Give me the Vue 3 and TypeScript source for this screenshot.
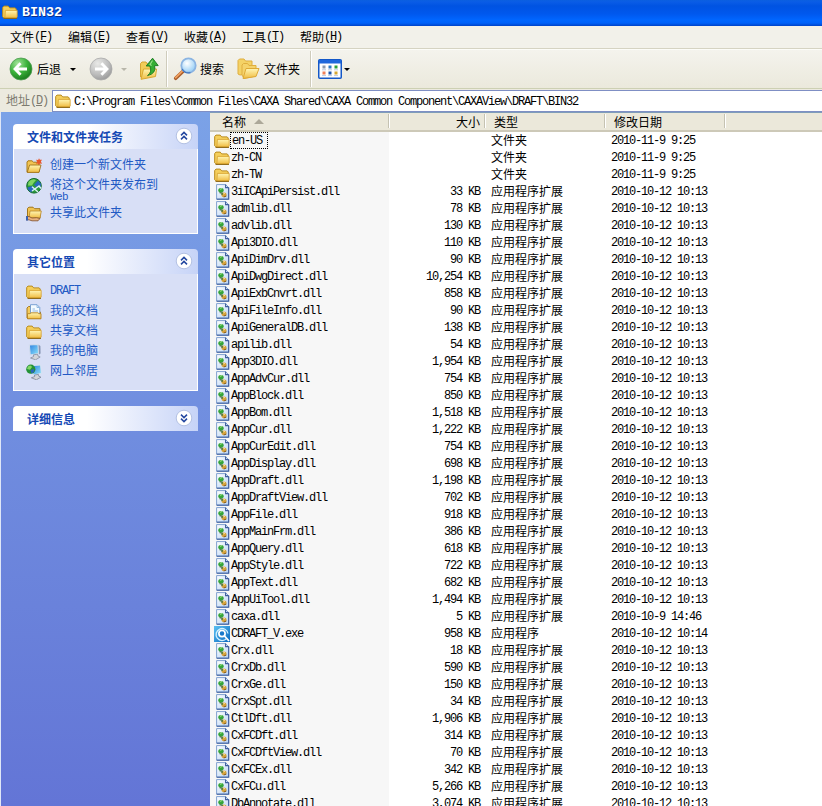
<script setup lang="ts">
interface FileRow { name: string; size: string; kind: string; date: string; icon: string }

const ext = '应用程序扩展'
const stamp = '2010-10-12 10:13'

const folders: FileRow[] = ['en-US', 'zh-CN', 'zh-TW'].map((name) => ({
  name, size: '', kind: '文件夹', date: '2010-11-9 9:25', icon: 'folder',
}))

const entries: [string, string][] = [
  ['3iICApiPersist.dll', '33'], ['admlib.dll', '78'], ['advlib.dll', '130'], ['Api3DIO.dll', '110'],
  ['ApiDimDrv.dll', '90'], ['ApiDwgDirect.dll', '10,254'], ['ApiExbCnvrt.dll', '858'],
  ['ApiFileInfo.dll', '90'], ['ApiGeneralDB.dll', '138'], ['apilib.dll', '54'], ['App3DIO.dll', '1,954'],
  ['AppAdvCur.dll', '754'], ['AppBlock.dll', '850'], ['AppBom.dll', '1,518'], ['AppCur.dll', '1,222'],
  ['AppCurEdit.dll', '754'], ['AppDisplay.dll', '698'], ['AppDraft.dll', '1,198'],
  ['AppDraftView.dll', '702'], ['AppFile.dll', '918'], ['AppMainFrm.dll', '386'], ['AppQuery.dll', '618'],
  ['AppStyle.dll', '722'], ['AppText.dll', '682'], ['AppUiTool.dll', '1,494'], ['caxa.dll', '5'],
  ['CDRAFT_V.exe', '958'], ['Crx.dll', '18'], ['CrxDb.dll', '590'], ['CrxGe.dll', '150'],
  ['CrxSpt.dll', '34'], ['CtlDft.dll', '1,906'], ['CxFCDft.dll', '314'], ['CxFCDftView.dll', '70'],
  ['CxFCEx.dll', '342'], ['CxFCu.dll', '5,266'], ['DbAnnotate.dll', '3,074'],
]

const rows: FileRow[] = folders.concat(entries.map(([name, kb]) => {
  const exe = name.endsWith('.exe')
  return {
    name,
    size: kb + ' KB',
    kind: exe ? '应用程序' : ext,
    date: exe ? '2010-10-12 10:14' : name === 'caxa.dll' ? '2010-10-9 14:46' : stamp,
    icon: exe ? 'exe' : 'dll',
  }
}))

const menus = [
  ['文件', 'F'], ['编辑', 'E'], ['查看', 'V'], ['收藏', 'A'], ['工具', 'T'], ['帮助', 'H'],
]

const places = [
  { icon: 'folder', label: 'DRAFT', latin: true },
  { icon: 'docs', label: '我的文档', latin: false },
  { icon: 'folder', label: '共享文档', latin: false },
  { icon: 'pc', label: '我的电脑', latin: false },
  { icon: 'net', label: '网上邻居', latin: false },
]
</script>

<template>
  <div class="window">
    <svg class="defs" width="0" height="0">
      <defs>
        <linearGradient id="gFold" x1="0" y1="0" x2="0" y2="1"><stop offset="0" stop-color="#fff6b4" /><stop offset="1" stop-color="#f0bc42" /></linearGradient>
        <linearGradient id="gPage" x1="0" y1="0" x2="1" y2="1"><stop offset="0" stop-color="#ffffff" /><stop offset="1" stop-color="#b8d3f4" /></linearGradient>
        <radialGradient id="gGreen" cx=".35" cy=".25" r=".85"><stop offset="0" stop-color="#a4e39a" /><stop offset=".5" stop-color="#3bb33b" /><stop offset="1" stop-color="#147018" /></radialGradient>
        <radialGradient id="gGrey" cx=".35" cy=".25" r=".85"><stop offset="0" stop-color="#e9e9e7" /><stop offset=".6" stop-color="#bcbcbc" /><stop offset="1" stop-color="#929292" /></radialGradient>
        <radialGradient id="gLens" cx=".4" cy=".35" r=".7"><stop offset="0" stop-color="#ffffff" /><stop offset="1" stop-color="#8fcbf5" /></radialGradient>
        <linearGradient id="gScreen" x1="0" y1="0" x2="1" y2="1"><stop offset="0" stop-color="#2b7fe0" /><stop offset="1" stop-color="#8fe6fb" /></linearGradient>
        <linearGradient id="gExe" x1="0" y1="0" x2="1" y2="1"><stop offset="0" stop-color="#5cc1f2" /><stop offset="1" stop-color="#0868c0" /></linearGradient>
      </defs>
      <symbol id="folder" viewBox="0 0 16 16">
        <path d="M.7 12.8V3.4L2 2.1H6.2L7.7 3.9H13.2L14.2 5V13L13.6 13.9H1.8Z" fill="#f5cf5c" stroke="#b88a1c" />
        <path d="M3.4 6.4H15.2V12.9L14.4 13.9H2.8Z" fill="url(#gFold)" stroke="#d5a02c" stroke-width=".8" />
        <path d="M1.6 14.4H15" stroke="#8a6412" />
      </symbol>
      <symbol id="dll" viewBox="0 0 16 16">
        <path d="M2.6 .6H11.6L14.6 3.6V15H2.6Z" fill="url(#gPage)" stroke="#7396cc" stroke-width=".9" />
        <path d="M11.6 .6V3.6H14.6M14.7 3.6V15.3H2.6" fill="none" stroke="#3d5c9c" stroke-width="1.1" />
        <ellipse cx="7" cy="6.2" rx="2.7" ry="2.3" fill="#36a53a" /><path d="M6 5.3L8 4.6" stroke="#a7e290" />
        <ellipse cx="10" cy="10.8" rx="2.6" ry="2.3" fill="#d5a23c" /><path d="M9.3 9.9L11 9.4" stroke="#f4dc8c" />
        <path d="M5.6 8.6L8.2 9.2L8 11" fill="none" stroke="#47713d" stroke-width="1.3" />
        <path d="M9.7 13.1L12.4 12" stroke="#855818" />
      </symbol>
      <symbol id="exe" viewBox="0 0 16 16">
        <rect width="16" height="16" fill="url(#gExe)" />
        <path d="M12.7 12.4A6 6 0 1 1 14 7.5" fill="none" stroke="#d5f2ff" stroke-width="1.3" />
        <circle cx="8" cy="7.6" r="3.1" fill="#1878ca" stroke="#fff" stroke-width="1.7" />
        <path d="M10.5 10L15 15" stroke="#fff" stroke-width="1.8" />
      </symbol>
      <symbol id="newfolder" viewBox="0 0 16 16">
        <path d="M1 14V4L2 2.8H6L7.5 4.2H13V14Z" fill="#f1c453" stroke="#a97a19" />
        <path d="M3.6 7H15L13 14.4H1.2Z" fill="url(#gFold)" stroke="#a0731c" stroke-width=".9" />
        <path d="M13 .2L13.8 1.8L16 1.7L14.9 3.6L16 5.8L13.8 5.4L13 7.2L12.1 5.4L9.9 5.8L11.2 3.6L9.9 1.7L12.2 1.9Z" fill="#e8562c" />
      </symbol>
      <symbol id="globe" viewBox="0 0 16 16">
        <circle cx="8" cy="7.8" r="7.3" fill="#2c9a3a" stroke="#126b2c" />
        <path d="M2.5 4Q6 0 10 2L7.5 5L6 7.4L2 7.4Z" fill="#7fd562" />
        <path d="M8 7L12 2.6L15 6L14.6 9L11 9.6ZM1.4 9.5L6 8L9 11L5 14.2Q2 13 1.4 9.5Z" fill="#2768bd" />
        <path d="M6 13L13 8L15 10.5M6 8.8L12 14" fill="none" stroke="#d8f3f4" stroke-width="1.4" />
      </symbol>
      <symbol id="share" viewBox="0 0 16 16">
        <path d="M1.5 11V2.4L3 1.2H7L8.5 2.7H14V12Z" fill="#f1c453" stroke="#a1751a" />
        <path d="M4 5H15.3L14 12H3Z" fill="url(#gFold)" stroke="#b8862a" stroke-width=".8" />
        <path d="M0 10.5H3L6 12L10.5 11.7L14 12.5L12 14.8H6L3 13.8H0Z" fill="#e9b27f" stroke="#7e4d2a" stroke-width=".8" />
        <path d="M0 10.2H2V14.5H0Z" fill="#3561b8" />
      </symbol>
      <symbol id="docs" viewBox="0 0 16 16">
        <path d="M1 14V4L2.5 2.5H5V8H14.5V14.5H1.5Z" fill="#f3cb5c" stroke="#a97a1c" />
        <path d="M4.5 10V.7H11L13.8 3.5V10Z" fill="#f4fbff" stroke="#6f9bcf" stroke-width=".9" />
        <path d="M11 .7V3.5H13.8M6.5 5H9M6.5 7H12" fill="none" stroke="#91b8e1" />
        <path d="M1.5 9.7H4L5 8.8H12L13 9.7H15V14.8H1.5Z" fill="url(#gFold)" stroke="#b5821f" stroke-width=".9" />
      </symbol>
      <symbol id="pc" viewBox="0 0 16 16">
        <path d="M3.4 1L12 .4L12.6 9.6L4.2 11Z" fill="url(#gScreen)" stroke="#d2dcec" stroke-width="1.1" />
        <path d="M12.6 .8L14.4 2L14.6 9.6L13 10.4Z" fill="#8796b4" />
        <path d="M7.5 10.8L11.5 10.2L12 12L14.2 13L9.6 15.8L4.5 14L7.5 12.6Z" fill="#d3d5da" stroke="#7c8496" stroke-width=".7" />
      </symbol>
      <symbol id="net" viewBox="0 0 16 16">
        <path d="M6 1.6L14.6 1L15.4 9.5L7 11Z" fill="url(#gScreen)" stroke="#dae5f1" />
        <circle cx="4.8" cy="5.2" r="4.6" fill="#249238" /><path d="M2 2.5Q5 .2 6 3L4 5.8L1 5Z" fill="#83d867" /><path d="M4.4 6L8 5Q9 8.4 5.4 9.5Z" fill="#2964bd" />
        <path d="M8.5 11L12.4 10.4L12.8 12.2L15 13.2L10.4 15.8L5.4 13.8L8.6 12.6Z" fill="#d3d5da" stroke="#747c8e" stroke-width=".7" />
      </symbol>
    </svg>

    <header class="title">
      <svg class="i16"><use href="#folder" /></svg>
      <span>BIN32</span>
    </header>

    <nav class="menu">
      <span v-for="m in menus" :key="m[1]" class="menu-item">{{ m[0] }}<span class="m key">(<u>{{ m[1] }}</u>)</span></span>
    </nav>

    <div class="toolbar">
      <svg class="round" viewBox="0 0 24 24"><circle cx="12" cy="12" r="11" fill="url(#gGreen)" stroke="#4d9a50" stroke-width=".8" /><path d="M11.6 6.2L6 12L11.6 17.8M6.5 12H18" fill="none" stroke="#fff" stroke-width="2.8" /></svg>
      <span class="t-back">后退</span>
      <i class="tri"></i>
      <svg class="round fwd" viewBox="0 0 24 24"><circle cx="12" cy="12" r="11" fill="url(#gGrey)" stroke="#aaa" stroke-width=".8" /><path d="M12.4 6.2L18 12L12.4 17.8M17.5 12H6" fill="none" stroke="#fff" stroke-width="2.8" /></svg>
      <i class="tri dim"></i>
      <svg class="up" viewBox="0 0 22 24">
        <path d="M2.5 20V6.5L4 5H8L9.5 7H15V19Z" fill="#f2cc58" stroke="#d6a534" />
        <path d="M3 22.3L5.5 12H18.5L17.5 19.5Z" fill="url(#gFold)" stroke="#d9a830" />
        <path d="M9.5 18.6Q14.5 15 11.8 9H8.2L14.6 1.2L20.2 8.6H16.6Q18.6 16.5 9.5 18.6Z" fill="#36ae35" stroke="#15771d" stroke-width=".9" />
        <path d="M14.5 3.5L12 7.6L13.6 8.4" fill="none" stroke="#9be08a" stroke-width="1.1" />
      </svg>
      <i class="sep s1"></i>
      <svg class="lens" viewBox="0 0 25 24">
        <path d="M9.8 14.5L2.7 21.3" stroke="#a95d2a" stroke-width="3.6" stroke-linecap="round" />
        <path d="M9.3 14.2L2.7 20.6" stroke="#f0a161" stroke-width="1.8" stroke-linecap="round" />
        <circle cx="15.5" cy="8.5" r="7.2" fill="url(#gLens)" stroke="#8bb4e2" stroke-width="1.8" />
        <path d="M9 12Q12 17 17.5 15.6" fill="none" stroke="#3f72bb" stroke-width="1.2" />
      </svg>
      <span class="t-search">搜索</span>
      <svg class="pair" viewBox="0 0 23 22">
        <path d="M1 16V2.5L2.5 1H7L8.5 3H15V15L3 17Z" fill="#f4d266" stroke="#dfae3e" />
        <path d="M5 17V7L6.5 5.5H10.5L12 7.5H19V18L7 20.5Z" fill="#f5d36b" stroke="#dfae3e" />
        <path d="M6 20.5L9 10.5H22L19 18.5Z" fill="url(#gFold)" stroke="#dda936" />
      </svg>
      <span class="t-fold">文件夹</span>
      <i class="sep s2"></i>
      <svg class="views" viewBox="0 0 24 20">
        <rect x=".75" y=".75" width="22.5" height="18.5" rx="1" fill="#fff" stroke="#1458c8" stroke-width="1.5" />
        <rect x="1" y="1" width="22" height="3.5" fill="#1e67dc" />
        <path d="M4.5 6.5h3v3h-3z" fill="#8b99ad" /><path d="M10.5 6.5h3v3h-3z" fill="#2c78c4" /><path d="M16.5 6.5h3v3h-3z" fill="#2ba03b" />
        <path d="M4.5 12.5h3v3h-3z" fill="#ef8058" /><path d="M10.5 12.5h3v3h-3z" fill="#1b55ab" /><path d="M16.5 12.5h3v3h-3z" fill="#d5a732" />
        <path d="M4 10.8h4M10 10.8h4M16 10.8h4M4 16.6h4M10 16.6h4M16 16.6h4" stroke="#a9bbd6" stroke-width=".8" />
      </svg>
      <i class="tri v"></i>
    </div>

    <div class="address">
      <span class="addr-label">地址<span class="m key">(<u>D</u>)</span></span>
      <div class="addr-box">
        <svg class="i16"><use href="#folder" /></svg>
        <span class="m path">C:\Program Files\Common Files\CAXA Shared\CAXA Common Component\CAXAView\DRAFT\BIN32</span>
      </div>
    </div>

    <main class="content">
      <aside class="side">
        <section class="panel">
          <h2>文件和文件夹任务<svg class="chev" viewBox="0 0 18 18"><circle cx="9" cy="9" r="7.8" fill="#fff" stroke="#b3c1e3" /><path d="M6 8.4L9 5.4L12 8.4M6 12.4L9 9.4L12 12.4" fill="none" stroke="#2448a0" stroke-width="1.5" /></svg></h2>
          <div class="body tasks">
            <a><svg class="i16"><use href="#newfolder" /></svg><span>创建一个新文件夹</span></a>
            <a class="two"><svg class="i16"><use href="#globe" /></svg><span class="lines"><span>将这个文件夹发布到</span><span class="m web">Web</span></span></a>
            <a><svg class="i16"><use href="#share" /></svg><span>共享此文件夹</span></a>
          </div>
        </section>
        <section class="panel">
          <h2>其它位置<svg class="chev" viewBox="0 0 18 18"><circle cx="9" cy="9" r="7.8" fill="#fff" stroke="#b3c1e3" /><path d="M6 8.4L9 5.4L12 8.4M6 12.4L9 9.4L12 12.4" fill="none" stroke="#2448a0" stroke-width="1.5" /></svg></h2>
          <div class="body places">
            <a v-for="p in places" :key="p.label"><svg class="i16"><use :href="'#' + p.icon" /></svg><span :class="{ m: p.latin }">{{ p.label }}</span></a>
          </div>
        </section>
        <section class="panel">
          <h2>详细信息<svg class="chev" viewBox="0 0 18 18"><circle cx="9" cy="9" r="7.8" fill="#fff" stroke="#b3c1e3" /><path d="M6 5.6L9 8.6L12 5.6M6 9.6L9 12.6L12 9.6" fill="none" stroke="#2448a0" stroke-width="1.5" /></svg></h2>
        </section>
      </aside>

      <div class="list">
        <div class="head">
          <span class="h-name">名称<i class="sort"></i></span>
          <span class="h-size">大小</span>
          <span class="h-kind">类型</span>
          <span class="h-date">修改日期</span>
        </div>
        <div class="rows">
          <div v-for="(r, i) in rows" :key="r.name" class="row">
            <span class="c-name"><svg class="i16"><use :href="'#' + r.icon" /></svg><span class="m label" :class="{ focus: i === 0 }">{{ r.name }}</span></span>
            <span class="c-size m">{{ r.size }}</span>
            <span class="c-kind">{{ r.kind }}</span>
            <span class="c-date m">{{ r.date }}</span>
          </div>
        </div>
      </div>
    </main>
  </div>
</template>

<style>
body { margin: 0; overflow: hidden; }
</style>

<style scoped>
* { box-sizing: border-box; }
.window {
  width: 822px; height: 806px; overflow: hidden; display: flex; flex-direction: column;
  font: 12px/17px "Noto Sans CJK SC", sans-serif; color: #000; background: #edebe0;
}
.defs { position: absolute; }
.m { font-family: "Liberation Mono", monospace; font-size: 12px; letter-spacing: -1.2px; white-space: pre; }
.key { display: inline-block; vertical-align: top; line-height: inherit; padding-top: 1px; }
.path { padding-top: 2px; }
.i16 { width: 16px; height: 16px; flex: none; display: block; }
.title {
  height: 26px; flex: none; display: flex; align-items: center; gap: 4px; padding: 0 2px;
  background: linear-gradient(#0b5fe0 0, #0a5ce6 2px, #0053e2 6px, #0058ee 14px, #0066ff 20px, #0062fa 23px, #0043c8 26px);
  color: #fff; font: bold 13.33px/26px "Liberation Mono", monospace; text-shadow: 1px 1px #0a2f8c;
}
.title .i16 { margin-bottom: 2px; }
.menu { height: 23px; flex: none; display: flex; gap: 16px; padding: 0 10px; border-bottom: 1px solid #d5d3c2; background: #f2f1ea; }
.menu-item { width: 42px; line-height: 21px; white-space: nowrap; }
.toolbar {
  height: 40px; flex: none; display: flex; align-items: center; padding-left: 9px;
  border-top: 1px solid #fcfcf8; border-bottom: 1px solid #cdd0b3; background: linear-gradient(#f4f3ed, #ebe9dc);
}
.toolbar span { line-height: 20px; white-space: nowrap; }
.round { width: 24px; height: 24px; }
.t-back { margin-left: 4px; width: 24px; }
.tri { width: 0; height: 0; border: 3px solid transparent; border-top: 3px solid #000; border-bottom: 0; margin-left: 9px; }
.fwd { margin-left: 13px; }
.tri.dim { border-top-color: #b8b6aa; margin-left: 8px; }
.up { width: 22px; height: 24px; margin-left: 11px; }
.sep { width: 2px; height: 36px; border-left: 1px solid #cfccbc; background: #fff; }
.s1 { margin-left: 6px; }
.lens { width: 25px; height: 24px; margin-left: 5px; }
.t-search { margin-left: 2px; width: 24px; }
.pair { width: 23px; height: 22px; margin-left: 13px; }
.t-fold { margin-left: 4px; width: 36px; }
.s2 { margin-left: 10px; }
.views { width: 24px; height: 20px; margin-left: 6px; }
.tri.v { margin-left: 2px; }
.address { height: 23px; flex: none; display: flex; padding-top: 1px; background: #eceadf; }
.addr-label { width: 52px; padding-left: 6px; line-height: 20px; color: #7d7b70; white-space: nowrap; }
.addr-box { flex: 1; display: flex; align-items: center; gap: 3px; padding-left: 2px; background: #fff; border: 1px solid #7f8fc4; border-right: 0; }
.content { flex: 1; min-height: 0; display: flex; }
.side {
  width: 210px; flex: none; display: flex; flex-direction: column; gap: 15px; padding: 12px 12px 0;
  background: linear-gradient(#7ba2e7, #6375d6); border-left: 1px solid #dfe7f7;
}
.panel h2 {
  margin: 0; height: 25px; display: flex; align-items: center; justify-content: space-between; padding: 0 5px 0 14px;
  font-size: 12px; font-weight: bold; line-height: 17px; color: #1549b4; border-radius: 4px 4px 0 0;
  background: linear-gradient(90deg, #fff 0, #fff 40%, #c6d3f7 100%);
}
.chev { width: 18px; height: 18px; margin-bottom: 2px; }
.body { border: 1px solid #fff; border-top: 0; background: #d8dff6; padding-left: 12px; display: flex; flex-direction: column; }
.body a { display: flex; gap: 8px; height: 20px; color: #2159c4; line-height: 16px; white-space: nowrap; }
.body a .i16 { margin-top: 2px; }
.body a .m { padding-top: 1px; }
.tasks { height: 85px; padding-top: 7px; }
.tasks a.two { height: 28px; }
.lines { display: flex; flex-direction: column; }
.body a .web { line-height: 11px; height: 11px; font-size: 11px; letter-spacing: -.6px; padding-top: 0; }
.places { height: 117px; padding-top: 8px; }
.list { flex: 1; min-width: 0; display: flex; flex-direction: column; background: #fff; }
.head { height: 20px; flex: none; display: flex; background: #ebe8da; border-top: 1px solid #7f9db9; border-bottom: 2px solid #cdc9b8; }
.head > span { border-right: 1px solid #c5c2b2; height: 14px; margin-top: 1px; line-height: 15px; box-shadow: 1px 0 #fff; }
.h-name { width: 179px; padding-left: 12px; display: flex; align-items: center; gap: 8px; }
.sort { border: 5px solid transparent; border-top: 0; border-bottom-color: #aca899; }
.h-size { width: 96px; text-align: right; padding-right: 4px; }
.h-kind { width: 120px; padding-left: 9px; }
.h-date { width: 120px; padding-left: 9px; }
.rows { flex: 1; min-height: 0; overflow: hidden; background: linear-gradient(90deg, #f7f7f7 179px, #fff 179px); }
.row { height: 17px; display: flex; white-space: nowrap; }
.c-name { width: 179px; padding-left: 4px; display: flex; align-items: center; }
.label { padding-left: 1px; height: 17px; line-height: 19px; }
.focus { outline: 1px dotted #000; outline-offset: -1px; width: 38px; padding-left: 2px; }
.c-size { width: 91px; text-align: right; line-height: 19px; }
.c-kind { width: 120px; padding-left: 11px; line-height: 16px; }
.c-date { padding-left: 11px; line-height: 19px; }
</style>
